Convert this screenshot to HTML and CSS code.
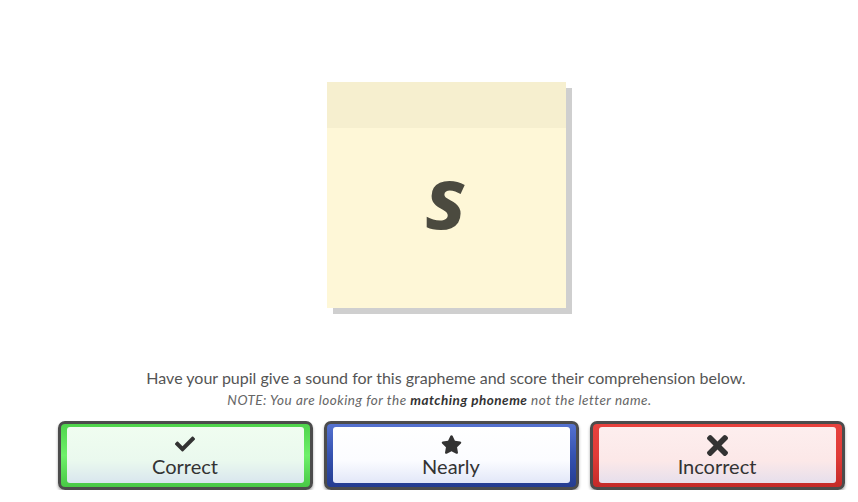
FILE: index.html
```html
<!DOCTYPE html>
<html lang="en">
<head>
    <meta charset="UTF-8">
    <meta name="viewport" content="width=device-width, initial-scale=1.0">
    <title>Phonics Check</title>
    <link rel="stylesheet" href="styles.css">
</head>
<body>

<div class="page">
    <div class="card">
        <div class="card-top"></div>
        <div class="card-body">
            <span class="grapheme">s</span>
        </div>
    </div>

    <p class="prompt">Have your pupil give a sound for this grapheme and score their comprehension below.</p>
    <p class="note">NOTE: You are looking for the <b>matching phoneme</b> not the letter name.</p>

    <div class="answers">
        <button class="btn btn-correct">
            <span class="btn-face">
                <svg class="icon icon-check" viewBox="0 0 512 512"><path d="M173.9 439.4l-166.4-166.4c-10-10-10-26.2 0-36.2l36.2-36.2c10-10 26.2-10 36.2 0L192 312.7 432.1 72.6c10-10 26.2-10 36.2 0l36.2 36.2c10 10 10 26.2 0 36.2l-294.4 294.4c-10 10-26.2 10-36.2 0z"/></svg>
                <span class="label">Correct</span>
            </span>
        </button>
        <button class="btn btn-nearly">
            <span class="btn-face">
                <svg class="icon icon-star" viewBox="0 0 576 512"><path d="M259.3 17.8L194 150.2 47.9 171.5c-26.2 3.8-36.7 36.1-17.7 54.6l105.7 103-25 145.5c-4.5 26.3 23.2 46 46.4 33.7L288 439.6l130.7 68.7c23.2 12.2 50.9-7.4 46.4-33.7l-25-145.5 105.7-103c19-18.5 8.5-50.8-17.7-54.6L382 150.2 316.7 17.8c-11.7-23.6-45.6-23.9-57.4 0z"/></svg>
                <span class="label">Nearly</span>
            </span>
        </button>
        <button class="btn btn-incorrect">
            <span class="btn-face">
                <svg class="icon icon-times" viewBox="0 80 352 352"><path d="M242.7 256l100.1-100.1c12.3-12.3 12.3-32.2 0-44.5l-22.2-22.2c-12.3-12.3-32.2-12.3-44.5 0L176 189.3 75.9 89.2c-12.3-12.3-32.2-12.3-44.5 0L9.2 111.5c-12.3 12.3-12.3 32.2 0 44.5L109.3 256 9.2 356.1c-12.3 12.3-12.3 32.2 0 44.5l22.2 22.2c12.3 12.3 32.2 12.3 44.5 0L176 322.7l100.1 100.1c12.3 12.3 32.2 12.3 44.5 0l22.2-22.2c12.3-12.3 12.3-32.2 0-44.5L242.7 256z"/></svg>
                <span class="label">Incorrect</span>
            </span>
        </button>
    </div>
</div>

</body>
</html>
```

FILE: styles.css
```css
body { margin: 0; padding: 0; background: #fff; font-family: Lato, "Open Sans", sans-serif; color: #555; }
.page { padding: 82px 0 0 34px; display: flex; flex-direction: column; align-items: center; }

.card { width: 239px; height: 226px; display: flex; flex-direction: column; background: #fef7d7; box-shadow: 6px 6px 0 #cfcfcf; }
.card-top { height: 46px; background: #f6efcf; }
.card-body { flex: 1; display: flex; align-items: center; justify-content: center; padding-bottom: 44px; }
.grapheme { font-family: "Open Sans", sans-serif; font-weight: 700; font-style: italic; font-size: 86px; line-height: 1; color: #4b4a3f; }

.prompt { margin: 60px 0 0; font-size: 16px; line-height: 20px; color: #555; }
.note { margin: 3px 0 0; padding-right: 13px; font-size: 13.5px; line-height: 18px; letter-spacing: .5px; font-style: italic; color: #666; }
.note b { color: #333; }

.answers { display: flex; gap: 11px; margin: 12px 0 0; padding-left: 10px; }
.btn { width: 255px; height: 69px; padding: 3px 6px 4px; border: 3px solid #4c4c4c; border-radius: 7px; box-shadow: 0 2px 3px rgba(0, 0, 0, .35); cursor: pointer; box-sizing: border-box; display: flex; }
.btn-face { flex: 1; display: flex; flex-direction: column; align-items: center; justify-content: flex-end; border-radius: 3px; padding-bottom: 6px; }
.icon { width: 20px; height: 20px; fill: #333; margin-bottom: 1px; }
.icon-star { width: 21px; height: 19px; }
.icon-times { width: 21px; height: 21px; margin-bottom: -1px; }
.label { font-family: Lato, sans-serif; font-size: 20px; line-height: 22px; color: #333; }

.btn-correct { background: linear-gradient(#4fd44c, #6ef06a 50%, #48c845); }
.btn-correct .btn-face { background: linear-gradient(#f0fdf0, #eaf9ee 60%, #d9e6ee); }
.btn-nearly { background: linear-gradient(#5572d0, #3552b0 50%, #243c90); }
.btn-nearly .btn-face { background: linear-gradient(#ffffff, #fbfcff 60%, #e2e7f8); }
.btn-incorrect { background: linear-gradient(#e8423e, #e03c38 50%, #c42a28); }
.btn-incorrect .btn-face { background: linear-gradient(#fdeeee, #fce8e8 60%, #e6dfec); }
```
